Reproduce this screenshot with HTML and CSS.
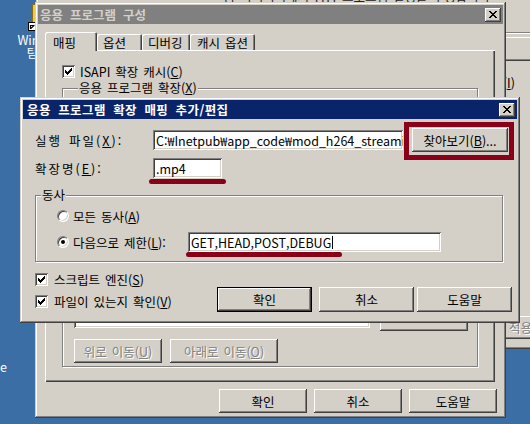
FILE: index.html
```html
<!DOCTYPE html>
<html lang="ko">
<head>
  <meta charset="UTF-8">
  <title>응용 프로그램 확장 매핑 추가/편집</title>
  <link rel="stylesheet" href="styles.css">
</head>
<body>
  <div class="desktop">

    <!-- desktop icons, mostly hidden behind the windows -->
    <div class="desk-icon">
      <svg width="32" height="32" viewBox="0 0 32 32">
        <path d="M4.5 5.5h9l2 3h13v19h-24z" fill="#f0c850" stroke="#8d6c12"/>
        <rect x="0.5" y="23.5" width="8" height="8" fill="#fff" stroke="#000"/>
        <path d="M2.5 30v-3.5H6M2.8 29.7l3.6-3.6" fill="none" stroke="#000" stroke-width="1.2"/>
      </svg>
      <div class="desk-label">Windows<br>탐색기</div>
    </div>
    <div class="desk-label desk-label-low">e</div>

    <!-- window further back, only its right edge shows -->
    <div class="win win-far">
      <div class="titlebar inactive"></div>
      <div class="far-body">
        <div class="far-caption">홈 디렉터리에서 응용 프로그램 설정을 구성합니다</div>
        <div class="far-groove"></div>
        <div class="far-btns">
          <div class="btn far-btn-a"></div>
          <div class="btn far-btn-b"></div>
        </div>
        <div class="far-label">실행 권한(<u>I</u>)</div>
        <div class="far-foot">
          <div class="btn far-apply disabled"><span>적용(<u>A</u>)</span></div>
        </div>
      </div>
    </div>

    <!-- 응용 프로그램 구성 -->
    <div class="win win-back">
      <div class="titlebar inactive">
        <span>응용 프로그램 구성</span>
        <span class="btn close">
          <svg width="16" height="14" viewBox="0 0 16 14"><path d="M4 3h2v1h-2zM10 3h2v1h-2zM5 4h2v1h-2zM9 4h2v1h-2zM6 5h4v1h-4zM7 6h2v1h-2zM6 7h4v1h-4zM5 8h2v1h-2zM9 8h2v1h-2zM4 9h2v1h-2zM10 9h2v1h-2z" fill="#000"/></svg>
        </span>
      </div>
      <div class="back-body">
        <div class="tabs">
          <div class="tab selected">매핑</div>
          <div class="tab tab-opt">옵션</div>
          <div class="tab tab-dbg">디버깅</div>
          <div class="tab tab-cache">캐시 옵션</div>
        </div>
        <div class="panel">
          <div class="check-row">
            <span class="cb"><svg width="13" height="13" viewBox="0 0 13 13"><path d="M9 3h1v1h-1zM8 4h2v1h-2zM3 5h1v1h-1zM7 5h3v1h-3zM3 6h2v1h-2zM6 6h3v1h-3zM3 7h5v1h-5zM4 8h3v1h-3zM5 9h1v1h-1z" fill="#000"/></svg></span>
            <span>ISAPI 확장 캐시(<u>C</u>)</span>
          </div>
          <!-- the lists and most buttons sit under the front dialog -->
          <div class="group group-ext">
            <span class="group-title">응용 프로그램 확장(<u>X</u>)</span>
            <div class="field list list-ext"></div>
            <div class="btn-row">
              <div class="btn"></div>
              <div class="btn"></div>
              <div class="btn"></div>
            </div>
          </div>
          <div class="group group-wild">
            <div class="wild-row">
              <div class="field list list-wild"></div>
              <div class="side-btns">
                <div class="btn"></div>
                <div class="btn"></div>
                <div class="btn"></div>
              </div>
            </div>
            <div class="move-row">
              <div class="btn disabled move-up"><span>위로 이동(<u>U</u>)</span></div>
              <div class="btn disabled move-down"><span>아래로 이동(<u>O</u>)</span></div>
            </div>
          </div>
        </div>
        <div class="footer">
          <div class="btn">확인</div>
          <div class="btn">취소</div>
          <div class="btn">도움말</div>
        </div>
      </div>
    </div>

    <!-- 응용 프로그램 확장 매핑 추가/편집 -->
    <div class="win win-front">
      <div class="titlebar active">
        <span>응용 프로그램 확장 매핑 추가/편집</span>
        <span class="btn close">
          <svg width="16" height="14" viewBox="0 0 16 14"><path d="M4 3h2v1h-2zM10 3h2v1h-2zM5 4h2v1h-2zM9 4h2v1h-2zM6 5h4v1h-4zM7 6h2v1h-2zM6 7h4v1h-4zM5 8h2v1h-2zM9 8h2v1h-2zM4 9h2v1h-2zM10 9h2v1h-2z" fill="#000"/></svg>
        </span>
      </div>
      <div class="dlg-body">
        <div class="form-row row-exe">
          <span class="form-label">실행 파일(<u>X</u>):</span>
          <div class="field exe-field">C:₩Inetpub₩app_code₩mod_h264_streaming.dll</div>
          <div class="btn browse"><span>찾아보기(<u>B</u>)...</span></div>
        </div>
        <div class="form-row row-ext">
          <span class="form-label">확장명(<u>E</u>):</span>
          <div class="field ext-field">.mp4</div>
        </div>
        <div class="group group-verbs">
          <span class="group-title">동사</span>
          <div class="radio-row">
            <span class="rb"></span>
            <span class="radio-text">모든 동사(<u>A</u>)</span>
          </div>
          <div class="radio-row">
            <span class="rb on"></span>
            <span class="radio-text">다음으로 제한(<u>L</u>):</span>
            <div class="field verbs-field"><span>GET,HEAD,POST,DEBUG</span><span class="caret"></span></div>
          </div>
        </div>
        <div class="dlg-bottom">
          <div class="checks">
            <div class="check-row">
              <span class="cb"><svg width="13" height="13" viewBox="0 0 13 13"><path d="M9 3h1v1h-1zM8 4h2v1h-2zM3 5h1v1h-1zM7 5h3v1h-3zM3 6h2v1h-2zM6 6h3v1h-3zM3 7h5v1h-5zM4 8h3v1h-3zM5 9h1v1h-1z" fill="#000"/></svg></span>
              <span>스크립트 엔진(<u>S</u>)</span>
            </div>
            <div class="check-row">
              <span class="cb"><svg width="13" height="13" viewBox="0 0 13 13"><path d="M9 3h1v1h-1zM8 4h2v1h-2zM3 5h1v1h-1zM7 5h3v1h-3zM3 6h2v1h-2zM6 6h3v1h-3zM3 7h5v1h-5zM4 8h3v1h-3zM5 9h1v1h-1z" fill="#000"/></svg></span>
              <span>파일이 있는지 확인(<u>V</u>)</span>
            </div>
          </div>
          <div class="dlg-btns">
            <div class="btn default">확인</div>
            <div class="btn btn-cancel">취소</div>
            <div class="btn btn-help">도움말</div>
          </div>
        </div>
      </div>
    </div>

    <!-- red annotation marks drawn over the screenshot -->
    <div class="mark mark-browse"></div>
    <div class="mark mark-line mark-ext"></div>
    <div class="mark mark-line mark-verbs"></div>

  </div>
</body>
</html>
```

FILE: styles.css
```css
* {
  box-sizing: border-box;
}

body {
  margin: 0;
  background: #3a6ea5;
  font-family: "Noto Sans CJK KR", "Liberation Sans", sans-serif;
  font-size: 12.5px;
  line-height: 15px;
  word-spacing: 1.5px;
  color: #000;
}

u {
  text-underline-offset: 1px;
}

.desktop {
  position: relative;
  width: 530px;
  height: 424px;
  overflow: hidden;
}

/* desktop icons */
.desk-icon {
  position: absolute;
  left: 4px;
  top: -1px;
  width: 80px;
  display: flex;
  flex-direction: column;
  align-items: center;
}

.desk-label {
  color: #fff;
  text-align: center;
  line-height: 13px;
  margin-top: 2px;
  word-spacing: 0;
}

.desk-label-low {
  position: absolute;
  left: 0;
  top: 360px;
  margin: 0;
}

/* classic window pieces */
.win {
  position: absolute;
  background: #d4d0c8;
  padding: 3px;
  box-shadow: inset -1px -1px #404040, inset 1px 1px #d4d0c8, inset -2px -2px #808080, inset 2px 2px #fff;
}

.titlebar {
  height: 19px;
  display: flex;
  align-items: center;
  justify-content: space-between;
  padding: 0 2px;
  font-weight: bold;
  word-spacing: 3.5px;
  white-space: nowrap;
}

.titlebar.active {
  background: #0a246a;
  color: #fff;
  padding-left: 4px;
}

.titlebar.inactive {
  background: #808080;
  color: #d4d0c8;
}

.btn {
  display: flex;
  align-items: center;
  justify-content: center;
  background: #d4d0c8;
  white-space: nowrap;
  box-shadow: inset -1px -1px #404040, inset 1px 1px #fff, inset -2px -2px #808080;
}

.btn.default {
  box-shadow: inset 0 0 0 1px #000, inset -2px -2px #404040, inset 2px 2px #fff, inset -3px -3px #808080;
}

.disabled {
  color: #808080;
  text-shadow: 1px 1px #fff;
}

.close {
  width: 16px;
  height: 14px;
}

.close svg {
  display: block;
}

.field {
  background: #fff;
  height: 20px;
  padding: 0 3px;
  display: flex;
  align-items: center;
  overflow: hidden;
  white-space: nowrap;
  word-spacing: 0;
  box-shadow: inset 1px 1px #808080, inset -1px -1px #fff, inset 2px 2px #404040, inset -2px -2px #d4d0c8;
}

.group {
  border: 1px solid #808080;
  box-shadow: inset 1px 1px #fff, 1px 1px #fff;
}

.group-title {
  display: table;
  background: #d4d0c8;
  padding: 0 1px;
  margin: -8px 0 0 5px;
  line-height: 14px;
}

.check-row {
  display: flex;
  align-items: center;
  height: 16px;
  gap: 5px;
  white-space: nowrap;
}

.cb {
  width: 13px;
  height: 13px;
  background: #fff;
  box-shadow: inset 1px 1px #808080, inset -1px -1px #fff, inset 2px 2px #404040, inset -2px -2px #d4d0c8;
}

.cb svg {
  display: block;
}

.rb {
  width: 12px;
  height: 12px;
  margin-right: 4px;
  border-radius: 50%;
  background: #fff;
  border: 1px solid;
  border-color: #808080 #fff #fff #808080;
  box-shadow: inset 1px 1px #404040, inset -1px -1px #d4d0c8;
  position: relative;
}

.rb.on::after {
  content: "";
  position: absolute;
  left: 3px;
  top: 3px;
  width: 4px;
  height: 4px;
  border-radius: 50%;
  background: #000;
}

/* far window */
.win-far {
  left: 36px;
  top: -40px;
  width: 520px;
  height: 389px;
  display: flex;
  flex-direction: column;
}

.far-body {
  flex: 1;
  display: flex;
  flex-direction: column;
}

.far-caption {
  margin-top: 8px;
  line-height: 13px;
  text-align: right;
  padding-right: 63px;
  color: #222;
}

.far-groove {
  margin-top: 29px;
  height: 2px;
  border-top: 1px solid #808080;
  border-bottom: 1px solid #fff;
}

.far-btns {
  display: flex;
  margin-top: 3px;
}

.far-btns .btn {
  width: 80px;
  height: 24px;
}

.far-btn-a {
  margin-left: 392px;
}

.far-btn-b {
  margin-left: 11px;
}

.far-label {
  margin-top: 14px;
  text-align: right;
  padding-right: 38px;
}

.far-foot {
  margin-top: auto;
  padding: 0 0 7px 446px;
}

.far-apply {
  width: 87px;
  height: 23px;
}

/* 응용 프로그램 구성 */
.win-back {
  left: 35px;
  top: 2px;
  width: 471px;
  height: 416px;
}

.back-body {
  padding: 8px 6px 0 7px;
}

.tabs {
  display: flex;
  align-items: flex-end;
  height: 18px;
}

.tab {
  height: 16px;
  padding: 1px 0 0 6px;
  border-radius: 2px 2px 0 0;
  box-shadow: inset 1px 1px #fff, inset -1px 0 #404040, inset -2px 0 #808080;
  background: #d4d0c8;
}

.tab.selected {
  position: relative;
  z-index: 1;
  width: 52px;
  height: 19px;
  margin-bottom: -1px;
  padding: 3px 0 0 8px;
}

.tab-opt {
  width: 45px;
}

.tab-dbg {
  width: 48px;
}

.tab-cache {
  width: 65px;
  padding-left: 7px;
}

.panel {
  width: 450px;
  height: 332px;
  padding: 13px 17px 0 17px;
  box-shadow: inset 1px 1px #fff, inset -1px -1px #404040, inset -2px -2px #808080;
}

.group-ext {
  margin-top: 9px;
  height: 122px;
  padding: 0 9px 0 11px;
}

.group-ext .group-title {
  margin-left: 4px;
}

.list-ext {
  margin-top: 2px;
  height: 73px;
}

.btn-row {
  display: flex;
  justify-content: flex-end;
  gap: 6px;
  margin-top: 6px;
}

.btn-row .btn {
  width: 88px;
  height: 24px;
}

.group-wild {
  margin-top: 8px;
  height: 149px;
  padding: 6px 9px 0 11px;
}

.wild-row {
  display: flex;
  align-items: flex-start;
  margin-top: 4px;
}

.list-wild {
  width: 296px;
  height: 99px;
}

.side-btns {
  display: flex;
  flex-direction: column;
  gap: 6px;
  margin: 18px 0 0 10px;
}

.side-btns .btn {
  width: 88px;
  height: 24px;
}

.move-row {
  display: flex;
  gap: 8px;
  margin-top: 8px;
}

.move-row .btn {
  height: 24px;
}

.move-up {
  width: 88px;
}

.move-down {
  width: 108px;
}

.footer {
  display: flex;
  justify-content: flex-end;
  gap: 7px;
  margin-top: 7px;
}

.footer .btn {
  width: 88px;
  height: 24px;
}

/* 응용 프로그램 확장 매핑 추가/편집 */
.win-front {
  left: 20px;
  top: 97px;
  width: 500px;
  height: 226px;
}

.win-front .titlebar {
  letter-spacing: 0.4px;
}

.dlg-body {
  padding: 9px 5px 0 12px;
}

.form-row {
  display: flex;
  align-items: center;
}

.row-exe {
  height: 24px;
  margin-right: 4px;
}

.row-ext {
  height: 20px;
  margin-top: 6px;
}

.form-label {
  width: 118px;
  letter-spacing: 2px;
  white-space: nowrap;
}

.exe-field {
  width: 250px;
}

.ext-field {
  width: 69px;
}

.browse {
  width: 96px;
  height: 24px;
  margin-left: 9px;
}

.group-verbs {
  margin: 17px 9px 0 0;
  padding-bottom: 9px;
}

.radio-row {
  display: flex;
  align-items: center;
  height: 20px;
  margin: 4px 0 0 21px;
}

.radio-row + .radio-row {
  margin-top: 6px;
}

.radio-text {
  width: 115px;
  white-space: nowrap;
}

.verbs-field {
  width: 253px;
}

.caret {
  width: 1px;
  height: 13px;
  margin-left: 1px;
  background: #000;
}

.dlg-bottom {
  display: flex;
  align-items: flex-end;
  margin-top: 9px;
}

.checks {
  display: flex;
  flex-direction: column;
  gap: 6px;
  padding-bottom: 3px;
}

.checks .check-row {
  gap: 6px;
}

.dlg-btns {
  display: flex;
  margin-left: auto;
}

.dlg-btns .btn {
  width: 95px;
  height: 25px;
}

.btn-cancel {
  margin-left: 7px;
}

.btn-help {
  margin-left: 3px;
}

/* red annotations */
.mark {
  position: absolute;
}

.mark-browse {
  left: 404px;
  top: 122px;
  width: 110px;
  height: 38px;
  border: 5px solid #8b0019;
}

.mark-line {
  height: 5px;
  border-radius: 3px;
  background: #8b0019;
}

.mark-ext {
  left: 149px;
  top: 179px;
  width: 77px;
}

.mark-verbs {
  left: 186px;
  top: 252px;
  width: 156px;
}
```
